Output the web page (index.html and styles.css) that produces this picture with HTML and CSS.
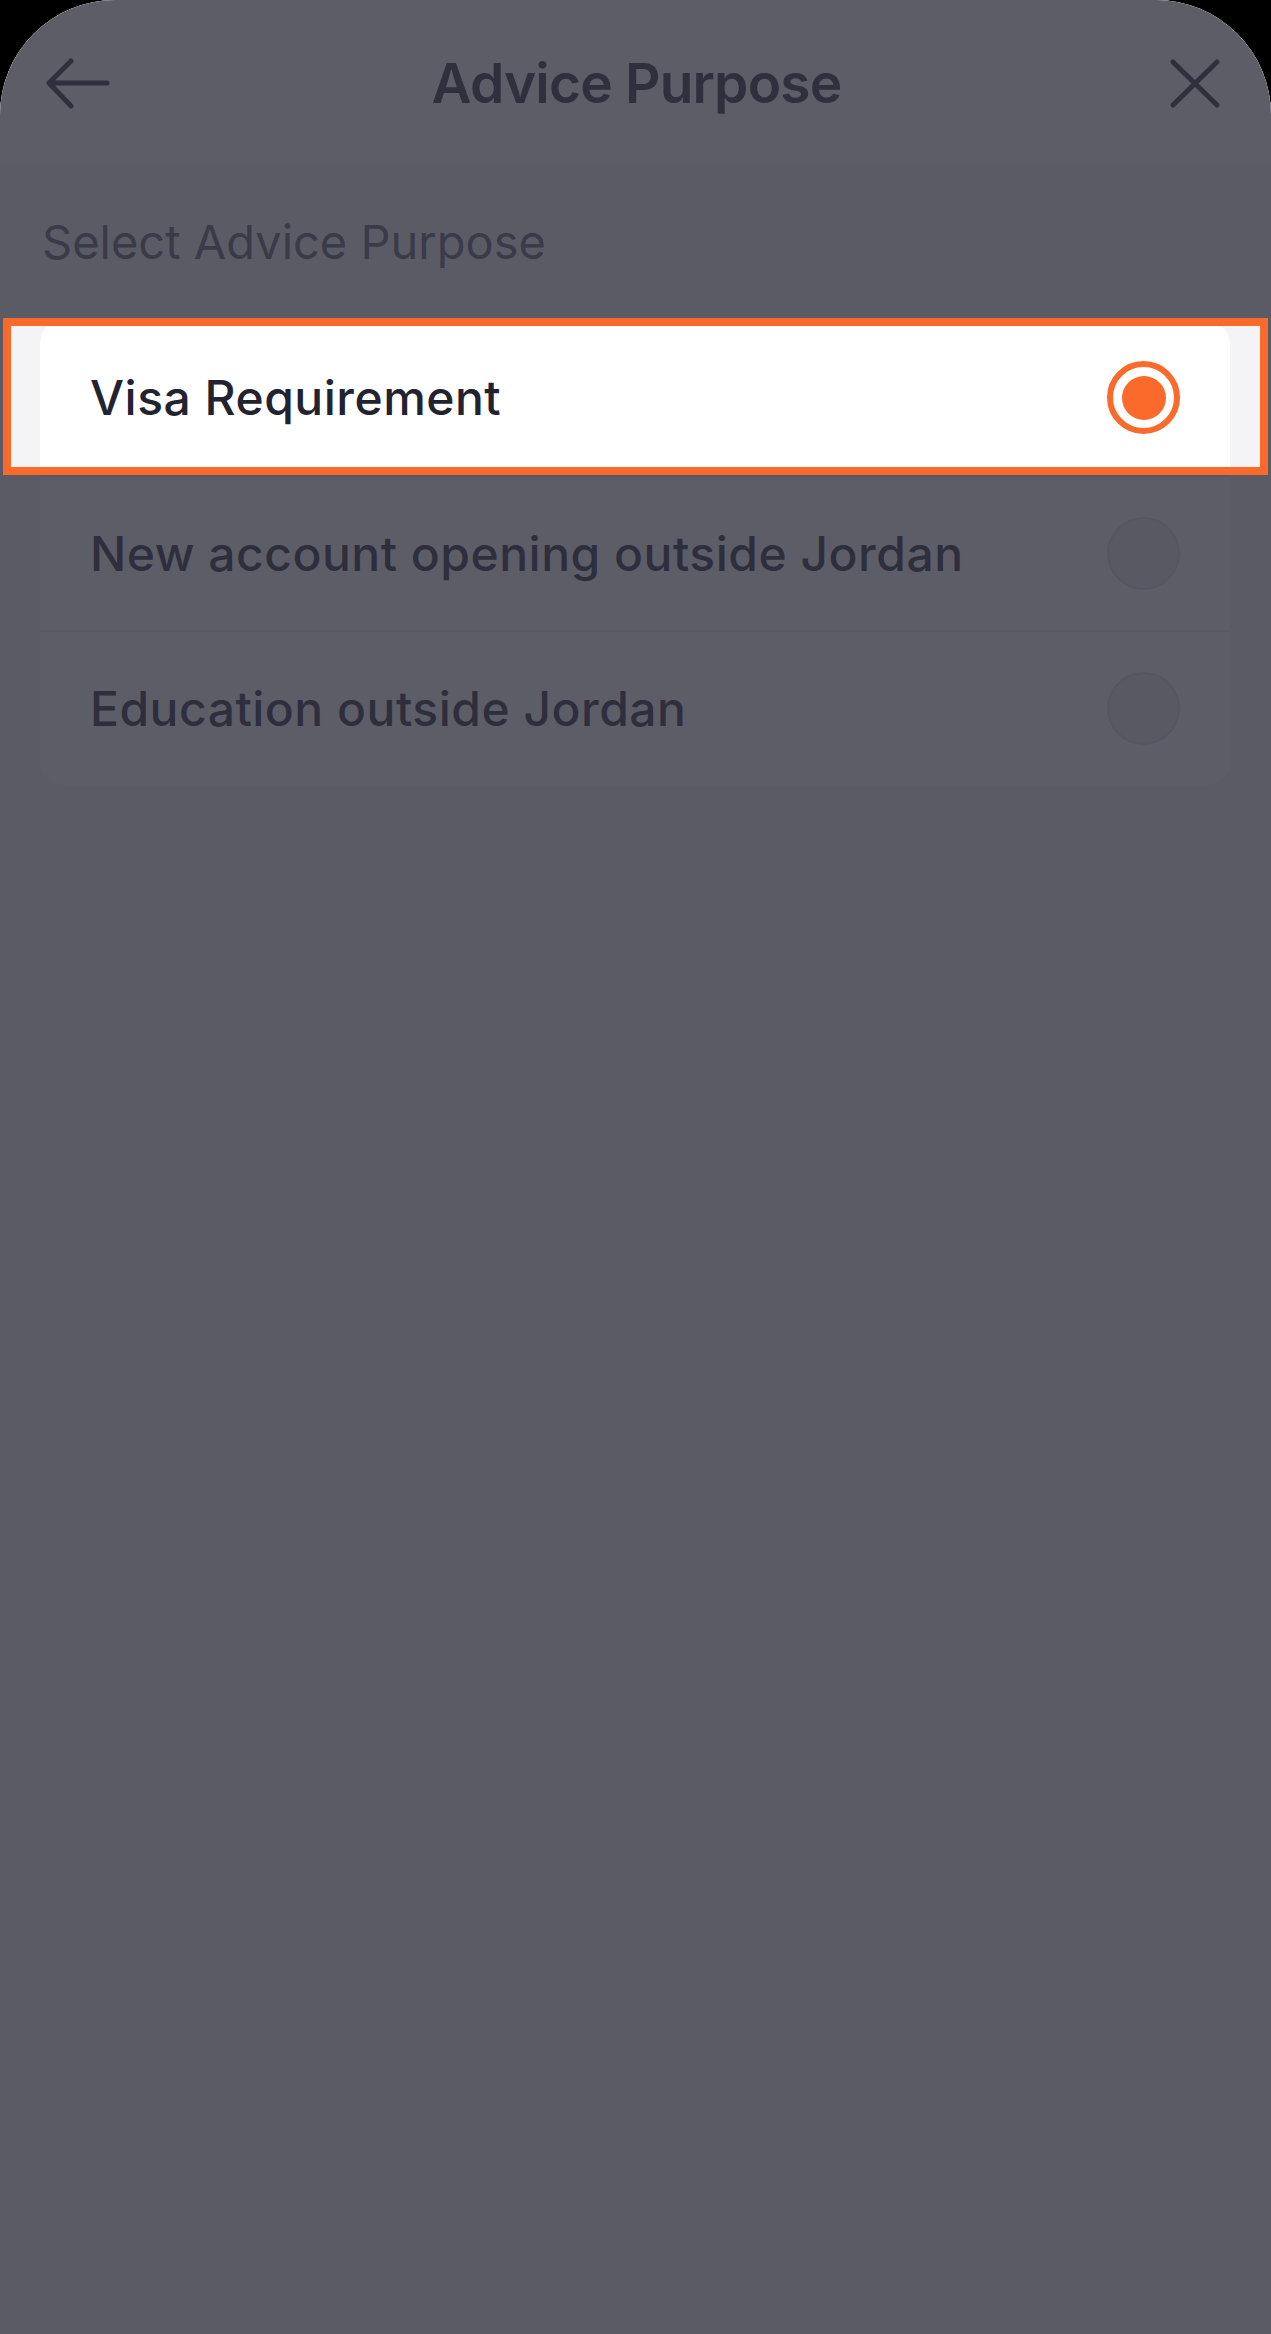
FILE: index.html
```html
<!DOCTYPE html>
<html lang="en">
<head>
  <meta charset="UTF-8" />
  <title>Advice Purpose</title>
  <link rel="stylesheet" href="styles.css">
</head>
<body>
  <div class="screen">

    <!-- Top bar -->
    <header class="topBar">
      <button class="iconButton" aria-label="Back">
        <svg width="64" height="64" viewBox="0 0 64 64">
          <path d="M61 32H4M25 10L3 32L25 55" fill="none" stroke="#292937" stroke-width="5" stroke-linecap="round" stroke-linejoin="round"/>
        </svg>
      </button>
      <h1 class="pageTitle">Advice Purpose</h1>
      <button class="iconButton" aria-label="Close">
        <svg width="64" height="64" viewBox="0 0 64 64">
          <path d="M10 11L54 54M54 11L10 54" fill="none" stroke="#292937" stroke-width="5" stroke-linecap="round"/>
        </svg>
      </button>
    </header>

    <main class="content">
      <p class="fieldLabel">Select Advice Purpose</p>

      <ul class="optionList">
        <li class="optionItem">
          <span class="optionText">Visa Requirement</span>
          <span class="radio checked"></span>
          <!-- spotlight frame around the selected row -->
          <div class="spotlight"></div>
        </li>
        <li class="optionItem">
          <span class="optionText">New account opening outside Jordan</span>
          <span class="radio"></span>
        </li>
        <li class="optionItem">
          <span class="optionText">Education outside Jordan</span>
          <span class="radio"></span>
        </li>
      </ul>
    </main>

  </div>
</body>
</html>
```

FILE: styles.css
```css
* {
  box-sizing: border-box;
}

html, body {
  margin: 0;
  padding: 0;
  background-color: #000;
}

body {
  font-family: Inter, "Noto Sans", Arial, sans-serif;
  color: #292937;
}

.screen {
  position: relative;
  width: 1271px;
  height: 2334px;
  background-color: #f4f4f6;
  border-radius: 115px 115px 0 0;
  overflow: hidden;
}

.topBar {
  display: flex;
  align-items: center;
  justify-content: space-between;
  height: 163px;
  padding: 2px 44px 0 46px;
  background-color: #fff;
}

.iconButton {
  display: flex;
  padding: 0;
  border: none;
  background: none;
  cursor: pointer;
}

.pageTitle {
  margin: 0;
  font-size: 55px;
  font-weight: 600;
  line-height: 66px;
  letter-spacing: -0.8px;
  color: #292937;
}

.content {
  padding: 51px 41px 0 40px;
}

.fieldLabel {
  margin: 0 0 50px 2px;
  font-size: 47px;
  font-weight: 400;
  line-height: 56px;
  color: #5c5c6b;
}

.optionList {
  list-style: none;
  margin: 0;
  padding: 0;
  background-color: #fff;
  border-radius: 24px;
}

.optionItem {
  position: relative;
  display: flex;
  align-items: center;
  justify-content: space-between;
  height: 155px;
  padding: 0 50px;
  border-top: 2px solid #ececf0;
}

.optionItem:first-child {
  border-top: none;
}

.optionText {
  font-size: 48px;
  font-weight: 500;
  letter-spacing: 0.5px;
  color: #23232f;
}

.radio {
  display: flex;
  align-items: center;
  justify-content: center;
  width: 73px;
  height: 73px;
  border-radius: 50%;
  background-color: #e9e9ed;
  border: 2px solid #dcdce2;
}

.radio.checked {
  background-color: #fff;
  border: 6px solid #f96a2b;
}

.radio.checked::after {
  content: "";
  width: 44px;
  height: 44px;
  border-radius: 50%;
  background-color: #f96a2b;
}

/* dims everything but the selected row */
.spotlight {
  position: absolute;
  top: -2px;
  bottom: 0;
  left: -37px;
  right: -38px;
  border: 8px solid #f96a2b;
  box-shadow: 0 0 0 2600px rgba(49, 49, 63, 0.79);
  z-index: 10;
  pointer-events: none;
}
```
